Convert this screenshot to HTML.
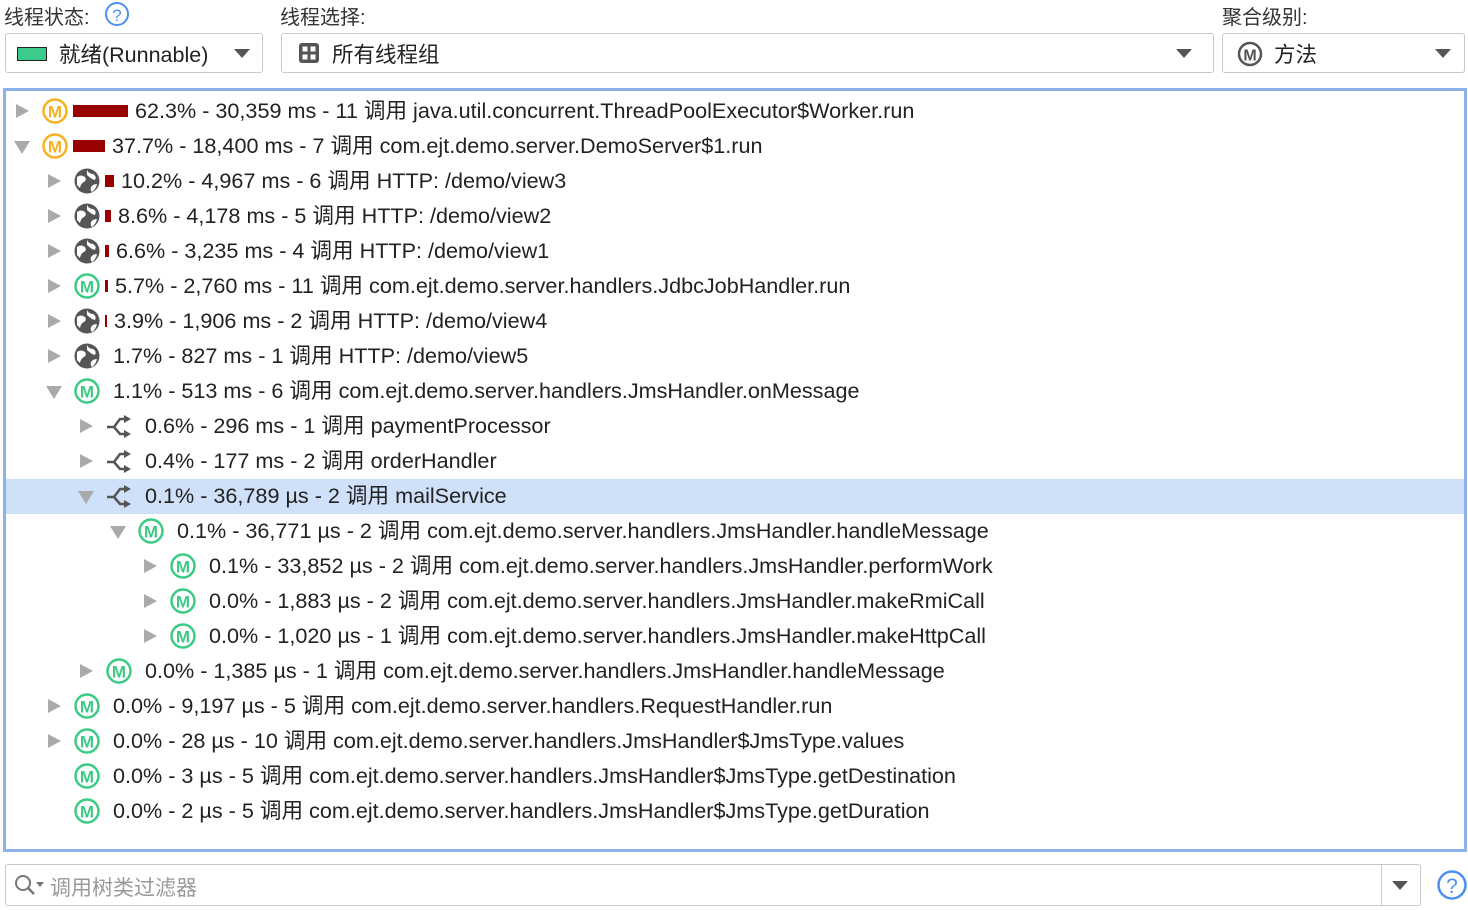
<!DOCTYPE html>
<html><head><meta charset="utf-8"><style>
body{margin:0;width:1468px;height:910px;background:#fff;font-family:"Liberation Sans","Noto Sans CJK SC",sans-serif;color:#222;position:relative;overflow:hidden}
.abs{position:absolute}
.lbl{font-size:20px;color:#333;top:1px}
.combo{position:absolute;top:33px;height:40px;border:1.5px solid #c8c8c8;border-radius:3px;background:#fff;box-sizing:border-box}
.combo .t{position:absolute;top:4px;font-size:21.5px;color:#222}
.dd{position:absolute;width:0;height:0;border-left:8px solid transparent;border-right:8px solid transparent;border-top:9px solid #555}
#panel{position:absolute;left:3px;top:88px;width:1464px;height:764px;border:3px solid #8db2ea;box-sizing:border-box}
.row{position:absolute;left:0;height:35px;width:1458px;font-size:21.6px;white-space:nowrap}
.row svg,.row .bar,.row .tx{position:absolute}
.row .tx{top:5px;line-height:25px}
.bar{background:#990000;top:12px;height:12px}
.sel{background:#cfe1f8}
</style></head><body>
<div class="abs lbl" style="left:4px">线程状态:</div>
<svg class="abs" style="left:104px;top:1px" width="26" height="26"><circle cx="13" cy="13" r="11" fill="none" stroke="#4d90f0" stroke-width="2"/><text x="13" y="20" font-size="17" text-anchor="middle" fill="#4d90f0" font-family="Liberation Sans">?</text></svg>
<div class="abs lbl" style="left:280px">线程选择:</div>
<div class="abs lbl" style="left:1222px">聚合级别:</div>

<div class="combo" style="left:5px;width:258px"><div class="abs" style="left:11px;top:13px;width:28px;height:12px;background:#3ccb8a;border:1px solid #222"></div><div class="t" style="left:53px">就绪(Runnable)</div><div class="dd" style="left:228px;top:15px"></div></div>
<div class="combo" style="left:281px;width:933px"><svg class="abs" style="left:16px;top:8px" width="22" height="22"><rect x="1" y="1" width="20" height="20" rx="3" fill="#555"/><rect x="4.5" y="4.5" width="5" height="5" fill="#fff"/><rect x="12.5" y="4.5" width="5" height="5" fill="#fff"/><rect x="4.5" y="12.5" width="5" height="5" fill="#fff"/><rect x="12.5" y="12.5" width="5" height="5" fill="#fff"/></svg><div class="t" style="left:50px">所有线程组</div><div class="dd" style="left:894px;top:15px"></div></div>
<div class="combo" style="left:1222px;width:243px"><svg class="abs" style="left:14px;top:7px" width="26" height="26"><circle cx="13" cy="13" r="11" fill="none" stroke="#555" stroke-width="2.5"/><text x="13" y="19.5" font-size="16" font-weight="bold" text-anchor="middle" fill="#555" font-family="Liberation Sans">M</text></svg><div class="t" style="left:51px">方法</div><div class="dd" style="left:212px;top:15px"></div></div>

<div id="panel">
<div class="row sel" style="top:388px"></div>
<div id="rows"></div>
</div>

<div class="abs" style="left:5px;top:864px;width:1416px;height:42px;border:1.5px solid #c8c8c8;border-radius:3px;box-sizing:border-box">
<svg class="abs" style="left:8px;top:9px" width="34" height="24"><circle cx="9" cy="9" r="7" fill="none" stroke="#777" stroke-width="2"/><line x1="14" y1="14" x2="20" y2="20" stroke="#777" stroke-width="2.5"/><polygon points="22,8 30,8 26,13" fill="#777"/></svg>
<div class="abs" style="left:44px;top:7px;font-size:21px;color:#999">调用树类过滤器</div>
<div class="abs" style="left:1375px;top:0;width:1px;height:40px;background:#ccc"></div>
<div class="dd" style="left:1386px;top:16px"></div>
</div>
<svg class="abs" style="left:1436px;top:869px" width="32" height="32"><circle cx="16" cy="16" r="13.5" fill="none" stroke="#4d90f0" stroke-width="2.5"/><text x="16" y="24" font-size="21" text-anchor="middle" fill="#4d90f0" font-family="Liberation Sans">?</text></svg>

<script>
const rows=[
[0,'r','mo',55,'62.3% - 30,359 ms - 11 调用 java.util.concurrent.ThreadPoolExecutor$Worker.run'],
[0,'d','mo',32,'37.7% - 18,400 ms - 7 调用 com.ejt.demo.server.DemoServer$1.run'],
[1,'r','g',9,'10.2% - 4,967 ms - 6 调用 HTTP: /demo/view3'],
[1,'r','g',6,'8.6% - 4,178 ms - 5 调用 HTTP: /demo/view2'],
[1,'r','g',4,'6.6% - 3,235 ms - 4 调用 HTTP: /demo/view1'],
[1,'r','m',3,'5.7% - 2,760 ms - 11 调用 com.ejt.demo.server.handlers.JdbcJobHandler.run'],
[1,'r','g',2,'3.9% - 1,906 ms - 2 调用 HTTP: /demo/view4'],
[1,'r','g',0,'1.7% - 827 ms - 1 调用 HTTP: /demo/view5'],
[1,'d','m',0,'1.1% - 513 ms - 6 调用 com.ejt.demo.server.handlers.JmsHandler.onMessage'],
[2,'r','s',0,'0.6% - 296 ms - 1 调用 paymentProcessor'],
[2,'r','s',0,'0.4% - 177 ms - 2 调用 orderHandler'],
[2,'d','s',0,'0.1% - 36,789 µs - 2 调用 mailService'],
[3,'d','m',0,'0.1% - 36,771 µs - 2 调用 com.ejt.demo.server.handlers.JmsHandler.handleMessage'],
[4,'r','m',0,'0.1% - 33,852 µs - 2 调用 com.ejt.demo.server.handlers.JmsHandler.performWork'],
[4,'r','m',0,'0.0% - 1,883 µs - 2 调用 com.ejt.demo.server.handlers.JmsHandler.makeRmiCall'],
[4,'r','m',0,'0.0% - 1,020 µs - 1 调用 com.ejt.demo.server.handlers.JmsHandler.makeHttpCall'],
[2,'r','m',0,'0.0% - 1,385 µs - 1 调用 com.ejt.demo.server.handlers.JmsHandler.handleMessage'],
[1,'r','m',0,'0.0% - 9,197 µs - 5 调用 com.ejt.demo.server.handlers.RequestHandler.run'],
[1,'r','m',0,'0.0% - 28 µs - 10 调用 com.ejt.demo.server.handlers.JmsHandler$JmsType.values'],
[1,'n','m',0,'0.0% - 3 µs - 5 调用 com.ejt.demo.server.handlers.JmsHandler$JmsType.getDestination'],
[1,'n','m',0,'0.0% - 2 µs - 5 调用 com.ejt.demo.server.handlers.JmsHandler$JmsType.getDuration']];
function icon(t,x){
 const st=`style="left:${x}px;top:4px"`;
 if(t=='mo'||t=='m'){const c=t=='mo'?'#f5b324':'#3dca85';return `<svg width="28" height="28" ${st}><circle cx="14" cy="14" r="11.5" fill="none" stroke="${c}" stroke-width="2.5"/><text x="14" y="20.5" font-size="17" font-weight="bold" text-anchor="middle" fill="${c}" font-family="Liberation Sans">M</text></svg>`;}
 if(t=='g')return `<svg width="28" height="28" ${st}><circle cx="14" cy="14" r="12.5" fill="#555"/><path d="M4 10 q4 -3 8 0 q2 3 -1 5 q-3 1 -4 6 l-3 -3 z" fill="#fff"/><path d="M14 3 q2 4 6 4 q4 2 2 6 l-3 -1 q-3 -2 -5 -4 z" fill="#fff"/><path d="M24 17 q-4 0 -6 3 q-1 3 1 5 q4 -3 5 -8 z" fill="#fff"/></svg>`;
 return `<svg width="28" height="28" ${st}><path d="M2 15 h7 l6 -8 h5 M9 15 l6 7 h5" fill="none" stroke="#555" stroke-width="2.5"/><polygon points="19,3 26,7 19,11" fill="#555"/><polygon points="19,18 26,22 19,26" fill="#555"/></svg>`;
}
let h='';
rows.forEach((r,i)=>{
 const [lv,tr,ic,bw,tx]=r;const top=2+i*35;const x0=9+lv*32;
 let s='';
 if(tr=='r')s+=`<svg width="16" height="16" style="left:${x0}px;top:10px"><polygon points="1,1 14,8 1,15" fill="#aaa"/></svg>`;
 if(tr=='d')s+=`<svg width="18" height="16" style="left:${x0-2}px;top:12px"><polygon points="1,1 17,1 9,14" fill="#aaa"/></svg>`;
 const ix=x0+26;
 s+=icon(ic,ix);
 let tx0=ix+33;
 if(bw){s+=`<div class="bar" style="left:${tx0-1}px;width:${bw}px"></div>`;tx0+=bw+6;}
 else tx0+=7;
 s+=`<div class="tx" style="left:${tx0}px">${tx}</div>`;
 h+=`<div class="row" style="top:${top}px">${s}</div>`;
});
document.getElementById('rows').innerHTML=h;
</script>
</body></html>
